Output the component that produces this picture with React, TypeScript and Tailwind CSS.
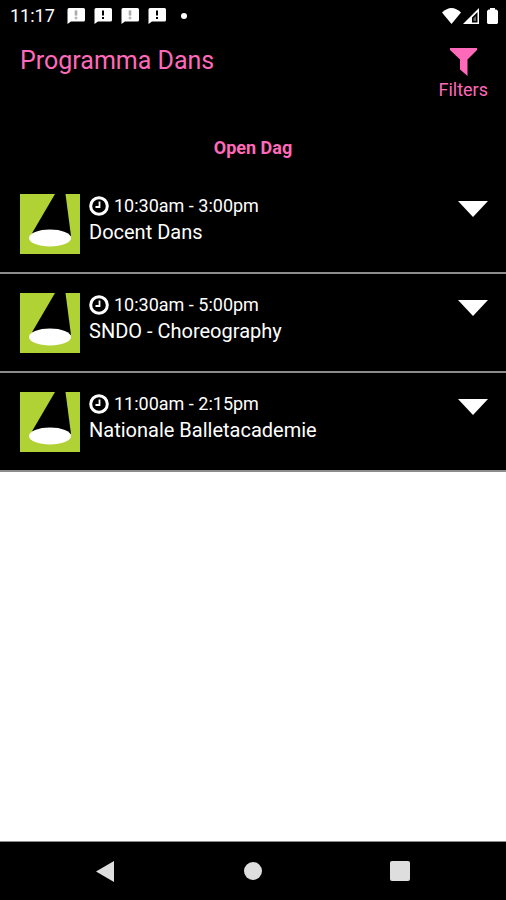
type Session = { time: string; title: string };

const sessions: Session[] = [
  { time: "10:30am - 3:00pm", title: "Docent Dans" },
  { time: "10:30am - 5:00pm", title: "SNDO - Choreography" },
  { time: "11:00am - 2:15pm", title: "Nationale Balletacademie" },
];

function MessageIcon({ faint }: { faint: boolean }) {
  return (
    <svg className="h-4 w-[18px]" viewBox="0 0 18 16" aria-hidden="true">
      <path d="M2 0h14.500a1.500 1.500 0 0 1 1.500 1.500v10.500a1.500 1.500 0 0 1-1.500 1.500H4L0.500 16V1.500A1.500 1.500 0 0 1 2 0z" fill="#fff" />
      <path d="M8 2.500h2v5H8zM8 9h2v2H8z" fill={faint ? "#888" : "#000"} stroke={faint ? "#ccc" : "none"} />
    </svg>
  );
}

function StatusBar() {
  return (
    <div className="flex h-8 items-center justify-between pr-2 pl-[10px] text-white">
      <div className="flex items-center">
        <span className="w-[57px] text-[18px] leading-5">11:17</span>
        <div className="flex gap-[9px]">
          <MessageIcon faint />
          <MessageIcon faint={false} />
          <MessageIcon faint />
          <MessageIcon faint={false} />
        </div>
        <span className="ml-[15px] size-[6px] rounded-full bg-white" />
      </div>
      <div className="flex items-center">
        <svg className="h-4 w-[19px]" viewBox="0 0 19 16" aria-hidden="true">
          <path d="M0 4.500Q9.500-4.500 19 4.500L9.500 16z" fill="#fff" />
        </svg>
        <svg className="ml-[2px] size-4" viewBox="0 0 16 16" aria-hidden="true">
          <path fillRule="evenodd" d="M16 0v16H0zM14.500 4L9 9.500v5h5.500z" fill="#fff" />
          <path d="M10.500 13V10.500L13 8v5z" fill="#666" />
        </svg>
        <svg className="ml-2 h-4 w-[11px]" viewBox="0 0 11 16" aria-hidden="true">
          <path d="M3 0h5v1.500h1.500L11 3v12l-1 1H1l-1-1V3l1.500-1.500H3z" fill="#fff" />
        </svg>
      </div>
    </div>
  );
}

function SpotlightImage() {
  return (
    <svg className="size-[60px] shrink-0" viewBox="0 0 60 60" role="img" aria-label="Spotlight">
      <path d="M0 0h60v60H0z" fill="#b1d235" />
      <path d="M35 0h10.500L51 42 11 41z" fill="#000" />
      <ellipse cx="30" cy="44" rx="21" ry="8.500" fill="#fff" />
    </svg>
  );
}

function SessionRow({ session }: { session: Session }) {
  return (
    <li className="flex h-[99px] items-start border-b-2 border-[#8c8c8c] pt-[19px] pr-[18px] pl-5">
      <SpotlightImage />
      <div className="ml-[9px] grow">
        <div className="flex h-6 items-center gap-[5px]">
          <svg className="size-5" viewBox="0 0 20 20" aria-hidden="true">
            <circle cx="10" cy="10" r="8.300" fill="none" stroke="#fff" strokeWidth="3" />
            <path d="M10.500 5.500V11H6.500" fill="none" stroke="#fff" strokeWidth="1.800" />
          </svg>
          <span className="text-[18px] leading-6">{session.time}</span>
        </div>
        <h2 className="text-[20px] leading-7">{session.title}</h2>
      </div>
      <button type="button" aria-label={`Show ${session.title}`} className="mt-[7px]">
        <svg className="h-4 w-[30px]" viewBox="0 0 30 16" aria-hidden="true">
          <path d="M0 0h30L15 16z" fill="#fff" />
        </svg>
      </button>
    </li>
  );
}

export default function App() {
  return (
    <div className="flex min-h-screen flex-col bg-white font-['Roboto',sans-serif]">
      <div className="bg-black text-white">
        <StatusBar />
        <header className="flex h-[90px] items-start justify-between pr-[18px] pl-5 text-[#ff69b9]">
          <h1 className="mt-[13px] text-[25px] leading-8">Programma Dans</h1>
          <button type="button" className="mt-4 flex flex-col items-center">
            <svg className="h-7 w-[27px]" viewBox="0 0 27 28" aria-hidden="true">
              <path d="M0 0h27v2L17.500 11.500V28L10 21.500V11.500L0 2z" fill="#ff69b9" />
            </svg>
            <span className="text-[18px] leading-7">Filters</span>
          </button>
        </header>
        <main>
          <p className="h-[53px] pt-3 text-center text-[18px] leading-7 font-bold text-[#ff69b9]">Open Dag</p>
          <ul>
            {sessions.map((session) => (
              <SessionRow key={session.title} session={session} />
            ))}
          </ul>
        </main>
      </div>
      <nav className="mt-auto grid h-[59px] grid-cols-[1fr_auto_1fr] items-center border-t border-[#8c8c8c] bg-black px-24">
        <button type="button" aria-label="Back" className="justify-self-start">
          <svg className="h-[21px] w-[18px]" viewBox="0 0 18 21" aria-hidden="true">
            <path d="M18 0v21L0 10.500z" fill="#dedede" />
          </svg>
        </button>
        <button type="button" aria-label="Home" className="size-[18px] rounded-full bg-[#dedede]" />
        <button type="button" aria-label="Recent apps" className="size-5 justify-self-end rounded-[2px] bg-[#dedede]" />
      </nav>
    </div>
  );
}
